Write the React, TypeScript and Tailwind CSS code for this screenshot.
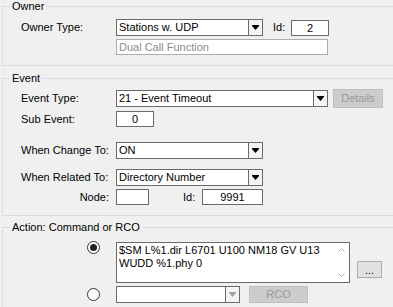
import React from "react";

const font = { fontFamily: '"Liberation Sans", Arial, sans-serif' };

function Arrow({ disabled }: { disabled?: boolean }) {
    return (
        <svg width="7" height="5" viewBox="0 0 7 5">
            <rect x="0" y="0" width="7" height="1" fill={disabled ? "#a0a0a0" : "#000"} />
            <polygon points="0,1 7,1 3.5,5" fill={disabled ? "#a0a0a0" : "#000"} />
        </svg>
    );
}

function Combo({ value, className, disabled }: { value: string; className: string; disabled?: boolean }) {
    return (
        <div className={`flex border border-[#6a6a6a] bg-white ${className}`}>
            <div className="flex-1 pl-[2px] leading-[15px] whitespace-nowrap overflow-hidden">{value}</div>
            <div className="w-[14px] border-l border-[#6a6a6a] bg-[#f4f4f4] flex items-center justify-center">
                <Arrow disabled={disabled} />
            </div>
        </div>
    );
}

function Box({ value, className }: { value: string; className: string }) {
    return (
        <div className={`border border-[#6a6a6a] bg-white text-center leading-[14px] ${className}`}>{value}</div>
    );
}

function Group({ title, className, children }: { title: string; className: string; children: React.ReactNode }) {
    return (
        <fieldset className={`w-[400px] ml-[2px] border border-[#dcdcdc] ${className}`}>
            <legend className="ml-[7px] px-[2px] leading-[13px]">{title}</legend>
            {children}
        </fieldset>
    );
}

function Radio({ checked }: { checked?: boolean }) {
    return (
        <div className="w-[13px] h-[13px] rounded-full border border-[#333] bg-white flex items-center justify-center">
            {checked && <div className="w-[7px] h-[7px] rounded-full bg-[#222]" />}
        </div>
    );
}

export default function App() {
    return (
        <div className="w-[393px] h-[307px] bg-[#f0f0f0] overflow-hidden text-[11px] text-black" style={font}>
            <Group title="Owner" className="pb-[10px]">
                <div className="flex items-center mt-[6px] h-[17px] pl-[18px]">
                    <div className="w-[95px]">Owner Type:</div>
                    <Combo value="Stations w. UDP" className="w-[147px] h-[17px]" />
                    <div className="ml-[10px] w-[18px]">Id:</div>
                    <Box value="2" className="w-[38px] h-[16px]" />
                </div>
                <div className="flex mt-[3px] pl-[113px]">
                    <div className="w-[212px] h-[16px] border border-[#adadad] bg-white text-[#8c8c8c] pl-[2px] leading-[14px]">
                        Dual Call Function
                    </div>
                </div>
            </Group>

            <Group title="Event" className="mt-[6px] pb-[10px]">
                <div className="flex items-center mt-[4px] h-[19px] pl-[18px]">
                    <div className="w-[95px]">Event Type:</div>
                    <Combo value="21 - Event Timeout" className="w-[212px] h-[17px]" />
                    <div className="ml-[5px] w-[50px] h-[19px] border border-[#bfbfbf] bg-[#cccccc] text-[#9a9a9a] flex items-center justify-center">
                        Details
                    </div>
                </div>
                <div className="flex items-center mt-[3px] h-[16px] pl-[18px]">
                    <div className="w-[95px]">Sub Event:</div>
                    <Box value="0" className="w-[38px] h-[16px]" />
                </div>
                <div className="flex items-center mt-[15px] h-[17px] pl-[18px]">
                    <div className="w-[95px]">When Change To:</div>
                    <Combo value="ON" className="w-[147px] h-[17px]" />
                </div>
                <div className="flex items-center mt-[10px] h-[17px] pl-[18px]">
                    <div className="w-[95px]">When Related To:</div>
                    <Combo value="Directory Number" className="w-[147px] h-[17px]" />
                </div>
                <div className="flex items-center mt-[3px] h-[16px] pl-[18px]">
                    <div className="w-[88px] text-right">Node:</div>
                    <div className="w-[7px]" />
                    <Box value="" className="w-[33px] h-[16px]" />
                    <div className="ml-[34px] w-[19px]">Id:</div>
                    <Box value="9991" className="w-[61px] h-[16px]" />
                </div>
            </Group>

            <Group title="Action: Command or RCO" className="mt-[5px] pb-[10px]">
                <div className="flex items-start mt-[8px] pl-[18px]">
                    <div className="w-[95px] pl-[66px] pt-[-1px]">
                        <div className="-mt-[1px]">
                            <Radio checked />
                        </div>
                    </div>
                    <div className="w-[234px] h-[41px] border border-[#6a6a6a] bg-white flex">
                        <div className="flex-1 pl-[2px] pt-[1px] leading-[13px]">
                            $SM L%1.dir L6701 U100 NM18 GV U13
                            <br />
                            WUDD %1.phy 0
                        </div>
                        <div className="w-[16px] flex flex-col items-center justify-between py-[5px]">
                            <svg width="7" height="4" viewBox="0 0 7 4">
                                <polyline points="0.5,3.5 3.5,0.5 6.5,3.5" fill="none" stroke="#a6a6a6" />
                            </svg>
                            <svg width="7" height="4" viewBox="0 0 7 4">
                                <polyline points="0.5,0.5 3.5,3.5 6.5,0.5" fill="none" stroke="#a6a6a6" />
                            </svg>
                        </div>
                    </div>
                    <div className="ml-[7px] mt-[19px] w-[25px] h-[17px] border border-[#adadad] bg-[#e1e1e1] flex items-center justify-center leading-[10px]">
                        ...
                    </div>
                </div>
                <div className="flex items-center mt-[3px] h-[17px] pl-[18px]">
                    <div className="w-[95px] pl-[66px]">
                        <Radio />
                    </div>
                    <Combo value="" disabled className="w-[124px] h-[17px]" />
                    <div className="ml-[9px] w-[59px] h-[17px] border border-[#bfbfbf] bg-[#cccccc] text-[#9a9a9a] flex items-center justify-center">
                        RCO
                    </div>
                </div>
            </Group>
        </div>
    );
}
